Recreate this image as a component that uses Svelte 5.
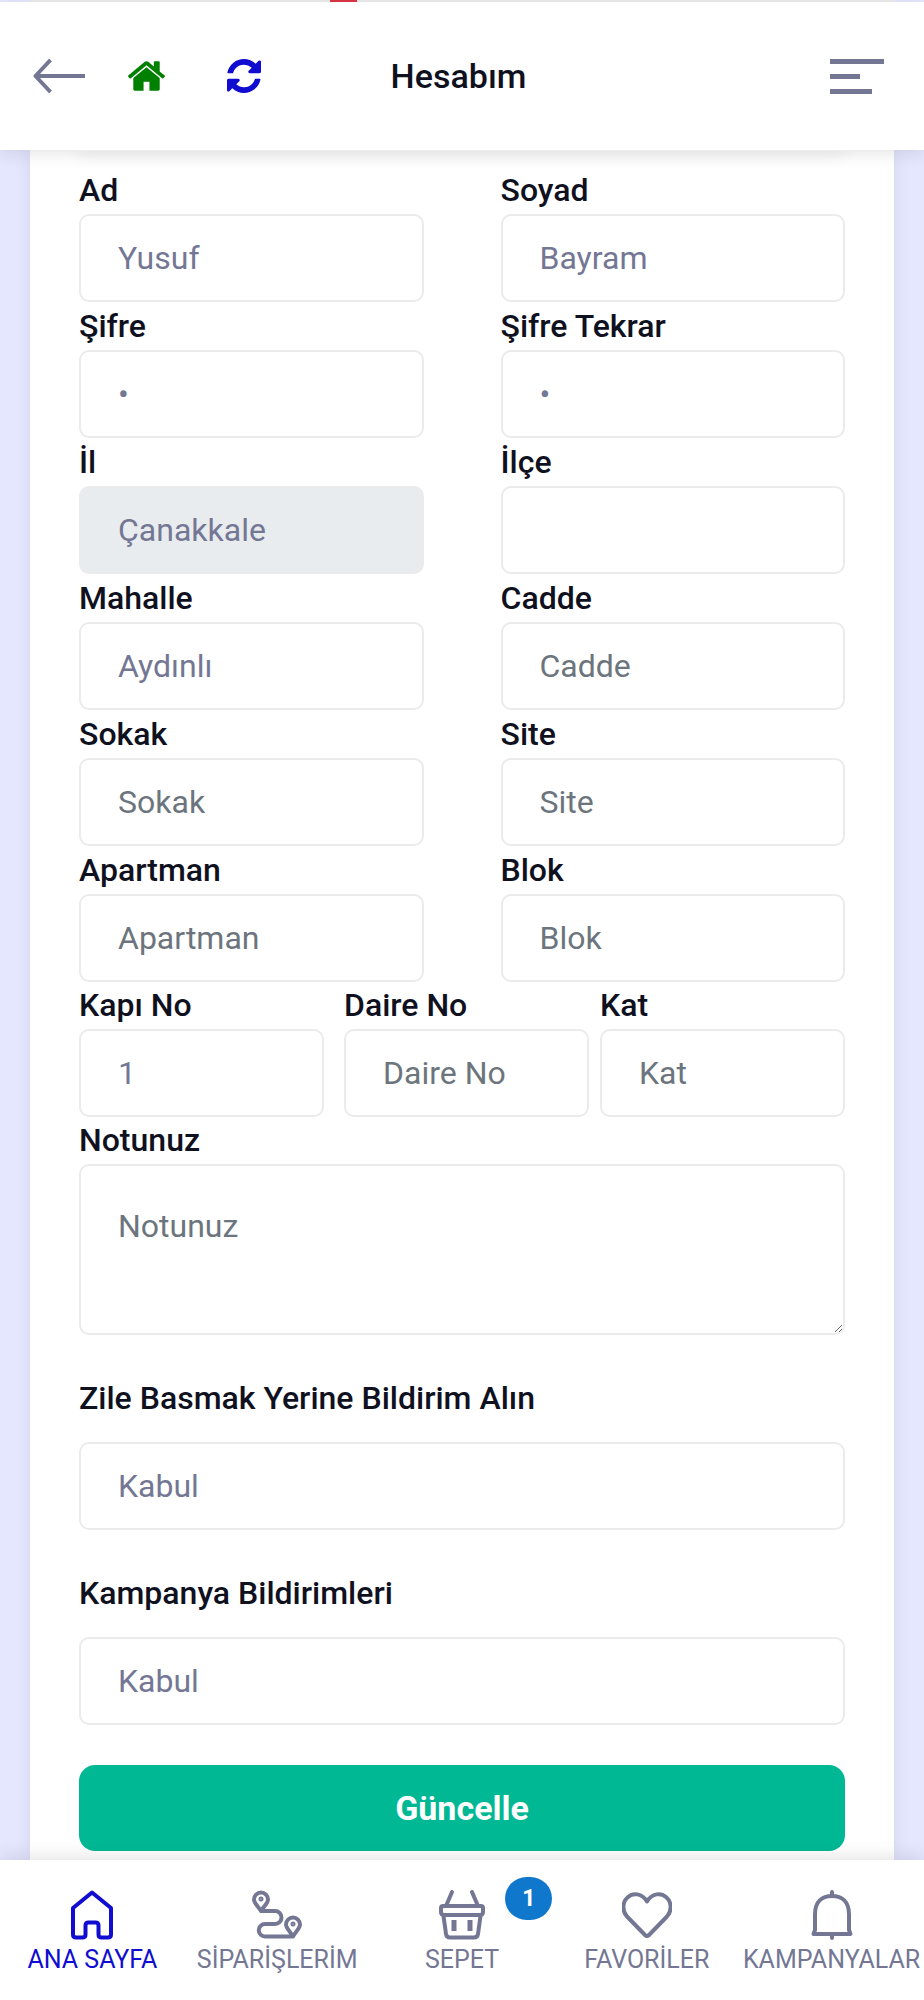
<script lang="ts">
    type Field = {
        id: string;
        label: string;
        value?: string;
        placeholder?: string;
        type?: string;
        disabled?: boolean;
    };

    let fields: Field[] = [
        { id: "ad", label: "Ad", value: "Yusuf" },
        { id: "soyad", label: "Soyad", value: "Bayram" },
        { id: "sifre", label: "Şifre", value: "1", type: "password" },
        { id: "sifre-tekrar", label: "Şifre Tekrar", value: "1", type: "password" },
        { id: "il", label: "İl", value: "Çanakkale", disabled: true },
        { id: "ilce", label: "İlçe" },
        { id: "mahalle", label: "Mahalle", value: "Aydınlı" },
        { id: "cadde", label: "Cadde", placeholder: "Cadde" },
        { id: "sokak", label: "Sokak", placeholder: "Sokak" },
        { id: "site", label: "Site", placeholder: "Site" },
        { id: "apartman", label: "Apartman", placeholder: "Apartman" },
        { id: "blok", label: "Blok", placeholder: "Blok" },
    ];

    let doorFields: Field[] = [
        { id: "kapi", label: "Kapı No", value: "1" },
        { id: "daire", label: "Daire No", placeholder: "Daire No" },
        { id: "kat", label: "Kat", placeholder: "Kat" },
    ];

    let note: string = "";
    let bell: string = "Kabul";
    let campaign: string = "Kabul";

    const handleSubmit = () => {
        note = note.trim();
    };
</script>

<div class="page">
    <div class="behind"><span></span></div>

    <header>
        <div class="left">
            <a href="#geri" aria-label="Geri">
                <svg width="52" height="34" viewBox="0 0 52 34" fill="none" stroke="#747794" stroke-width="4" stroke-linejoin="round">
                    <path d="M52 17H3M17.500 1L2.500 17L17.500 33" />
                </svg>
            </a>
            <a href="#ana" aria-label="Ana sayfa">
                <svg width="37" height="30" viewBox="89 256 1614 1280" fill="#008000">
                    <path d="M1472 992v480q0 26-19 45t-45 19h-384v-384h-256v384h-384q-26 0-45-19t-19-45v-480q0-1 .5-3t.5-3l575-474 575 474q1 2 1 6zm223-69l-62 74q-8 9-21 11h-3q-13 0-21-7l-692-577-692 577q-12 8-24 7-13-2-21-11l-62-74q-8-10-7-23.500t11-21.500l719-599q32-26 76-26t76 26l244 204v-195q0-14 9-23t23-9h192q14 0 23 9t9 23v408l219 182q10 8 11 21.500t-7 23.500z" />
                </svg>
            </a>
            <a href="#yenile" aria-label="Yenile">
                <svg width="34" height="34" viewBox="128 128 1536 1536" fill="#100dd1">
                    <path d="M1639 1056q0 5-1 7-64 268-268 434.500t-478 166.500q-146 0-282.500-55t-243.500-157l-129 129q-19 19-45 19t-45-19-19-45v-448q0-26 19-45t45-19h448q26 0 45 19t19 45-19 45l-137 137q71 66 161 102t187 36q134 0 250-65t186-179q11-17 53-117 8-23 30-23h192q13 0 22.500 9.500t9.500 22.500zm25-800v448q0 26-19 45t-45 19h-448q-26 0-45-19t-19-45 19-45l138-138q-148-137-349-137-134 0-250 65t-186 179q-11 17-53 117-8 23-30 23h-199q-13 0-22.500-9.500t-9.500-22.500v-7q65-268 270-434.500t480-166.500q146 0 284 55.500t245 156.500l130-129q19-19 45-19t45 19 19 45z" />
                </svg>
            </a>
        </div>
        <h1>Hesabım</h1>
        <button class="menu" type="button" aria-label="Menü">
            <span></span>
            <span></span>
            <span></span>
        </button>
    </header>

    <main>
        <div class="edge"></div>
        <form on:submit|preventDefault={handleSubmit}>
            <div class="pairs">
                {#each fields as field}
                    <div class="field">
                        <label for={field.id}>{field.label}</label>
                        <input
                            id={field.id}
                            type={field.type ?? "text"}
                            placeholder={field.placeholder}
                            disabled={field.disabled}
                            value={field.value ?? ""}
                        />
                    </div>
                {/each}
            </div>

            <div class="doors">
                {#each doorFields as field}
                    <div class="field">
                        <label for={field.id}>{field.label}</label>
                        <input
                            id={field.id}
                            type="text"
                            placeholder={field.placeholder}
                            value={field.value ?? ""}
                        />
                    </div>
                {/each}
            </div>

            <div class="field">
                <label for="not">Notunuz</label>
                <textarea id="not" placeholder="Notunuz" bind:value={note}></textarea>
            </div>

            <div class="field spaced">
                <label for="zil">Zile Basmak Yerine Bildirim Alın</label>
                <select id="zil" bind:value={bell}>
                    <option>Kabul</option>
                    <option>Ret</option>
                </select>
            </div>

            <div class="field spaced">
                <label for="kampanya">Kampanya Bildirimleri</label>
                <select id="kampanya" bind:value={campaign}>
                    <option>Kabul</option>
                    <option>Ret</option>
                </select>
            </div>

            <button class="submit" type="submit">Güncelle</button>
        </form>
    </main>

    <nav>
        <a class="active" href="#anasayfa">
            <svg width="50" height="50" viewBox="0 0 50 50">
                <path d="M25 2.500L44 18V44.500Q44 47.500 41 47.500H34.500Q31.500 47.500 31.500 44.500V35.500Q31.500 32.500 28.500 32.500H21.500Q18.500 32.500 18.500 35.500V44.500Q18.500 47.500 15.500 47.500H9Q6 47.500 6 44.500V18Z" />
            </svg>
            ANA SAYFA
        </a>
        <a href="#siparislerim">
            <svg width="50" height="50" viewBox="0 0 50 50">
                <path d="M9 21C5 15 2 13 2 9.500A7 7 0 0 1 16 9.500C16 13 13 15 9 21H23A6.500 6.500 0 0 1 23 34H13A6 6 0 0 0 13 46.500H41C37 40 34 38 34 34.500A7 7 0 0 1 48 34.500C48 38 45 40 41 46.500" />
                <g stroke-width="2">
                    <circle cx="9" cy="9" r="1.500" />
                    <circle cx="41" cy="34" r="1.500" />
                </g>
            </svg>
            SİPARİŞLERİM
        </a>
        <a href="#sepet">
            <svg width="50" height="50" viewBox="0 0 50 50">
                <path d="M15 2L9 16M35 2L41 16M6 16H44Q46 16 46 18V22Q46 25 43 25H7Q4 25 4 22V18Q4 16 6 16ZM6.500 26L9 44Q9.500 47.500 13 47.500H37Q40.500 47.500 41 44L43.500 26" />
                <path d="M17 30V41M33 30V41" stroke-width="5" stroke-linecap="butt" />
            </svg>
            SEPET
            <span class="badge">1</span>
        </a>
        <a href="#favoriler">
            <svg width="50" height="50" viewBox="0 0 50 50">
                <path d="M25 11.500C20 3 11 2.500 6 7C0 12 0 21 5 26.500L23 45Q25 47 27 45L45 26.500C50 21 50 12 44 7C39 2.500 30 3 25 11.500Z" />
            </svg>
            FAVORİLER
        </a>
        <a href="#kampanyalar">
            <svg width="50" height="50" viewBox="0 0 50 50">
                <path d="M25 2V6M25 44V48M8 40V24C8 12 15 6 25 6S42 12 42 24V40L43.500 44H6.500Z" />
            </svg>
            KAMPANYALAR
        </a>
    </nav>
</div>

<style>
    :global(body) {
        margin: 0;
        background: #e5e7ff;
    }

    .page {
        font-family: Roboto, "Liberation Sans", sans-serif;
        font-size: 32px;
        color: #10111f;
        overflow: hidden;
    }

    .behind {
        display: flex;
        height: 2px;
        margin: 0 30px;
        padding-left: 300px;
        background: #ebebeb;
    }

    .behind span {
        width: 27px;
        background: #dc3545;
    }

    header {
        position: relative;
        z-index: 2;
        display: grid;
        grid-template-columns: 1fr auto 1fr;
        align-items: center;
        height: 148px;
        padding: 0 40px 0 33px;
        background: #fff;
        box-shadow: 0 4px 16px rgba(0, 0, 0, 0.1);
    }

    .left {
        display: flex;
        align-items: center;
    }

    .left a {
        display: flex;
        margin-right: 43px;
    }

    .left a:nth-child(2) {
        margin-right: 62px;
    }

    h1 {
        margin: 0;
        font-size: 34px;
        font-weight: 500;
    }

    .menu {
        display: flex;
        flex-direction: column;
        gap: 10px;
        justify-self: end;
        width: 54px;
        padding: 0;
        border: 0;
        background: none;
    }

    .menu span {
        width: 54px;
        height: 5px;
        background: #747794;
    }

    .menu span:nth-child(2) {
        width: 30px;
    }

    .menu span:nth-child(3) {
        width: 42px;
    }

    main {
        margin: 0 30px;
        padding: 0 49px 9px;
        background: #fff;
        box-shadow: 0 0 16px rgba(0, 0, 0, 0.08);
    }

    /* bottom of the card scrolled under the header */
    .edge {
        height: 1px;
        margin-bottom: 16px;
        box-shadow: 0 0 16px 1px rgba(0, 0, 0, 0.2);
    }

    form {
        display: flex;
        flex-direction: column;
    }

    .pairs {
        display: grid;
        grid-template-columns: 1fr 1fr;
        gap: 1px 77px;
    }

    .doors {
        display: flex;
    }

    .doors .field {
        flex: 1;
        margin-right: 11px;
    }

    .doors .field:first-child {
        margin-right: 20px;
    }

    .doors .field:last-child {
        margin-right: 0;
    }

    .field {
        display: flex;
        flex-direction: column;
        min-width: 0;
    }

    .spaced {
        gap: 20px;
        margin-top: 40px;
    }

    label {
        line-height: 47px;
        font-weight: 500;
    }

    input,
    select,
    textarea {
        box-sizing: border-box;
        width: 100%;
        height: 88px;
        padding: 0 37px;
        border: 2px solid #ebebeb;
        border-radius: 10px;
        background: #fff;
        color: #747794;
        font-family: inherit;
        font-size: 32px;
        opacity: 1;
        appearance: none;
    }

    input:disabled {
        background: #e9ecef;
    }

    input::placeholder,
    textarea::placeholder {
        color: #6c757d;
        opacity: 1;
    }

    textarea {
        height: 171px;
        padding: 37px;
        line-height: 47px;
        resize: vertical;
    }

    .submit {
        height: 86px;
        margin-top: 40px;
        border: 0;
        border-radius: 16px;
        background: #00b894;
        color: #fff;
        font-family: inherit;
        font-size: 34px;
        font-weight: 700;
    }

    nav {
        position: relative;
        z-index: 2;
        display: flex;
        height: 140px;
        background: #fff;
        box-shadow: 0 -4px 16px rgba(0, 0, 0, 0.1);
    }

    nav a {
        position: relative;
        display: flex;
        flex: 1 1 0;
        flex-direction: column;
        align-items: center;
        min-width: 0;
        padding-top: 30px;
        color: #747794;
        font-size: 25px;
        line-height: 40px;
        text-decoration: none;
        white-space: nowrap;
    }

    nav .active {
        color: #100dd1;
    }

    nav svg {
        flex: none;
        fill: none;
        stroke: currentColor;
        stroke-width: 4;
        stroke-linecap: round;
        stroke-linejoin: round;
    }

    .badge {
        position: absolute;
        top: 17px;
        right: 2px;
        width: 47px;
        border-radius: 22px;
        background: #1078cc;
        color: #fff;
        font-size: 23px;
        font-weight: 700;
        line-height: 43px;
        text-align: center;
    }
</style>
